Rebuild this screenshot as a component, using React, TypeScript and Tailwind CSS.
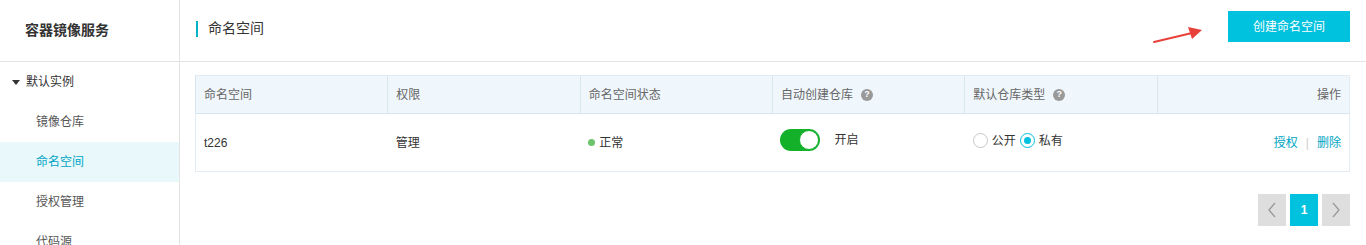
import React from 'react';

const font = { fontFamily: '"Liberation Sans", "Noto Sans CJK SC", sans-serif' };

const Help = () => (
  <span className="ml-2 inline-flex h-[12px] w-[12px] items-center justify-center rounded-full bg-[#999] text-[9px] font-bold leading-none text-white">
    ?
  </span>
);

const Sidebar = () => (
  <div className="w-[180px] shrink-0 border-r border-[#e3e3e3] bg-white">
    <div className="flex h-[62px] items-center border-b border-[#e3e3e3] pl-[25px] text-[14px] font-bold text-[#333]">
      容器镜像服务
    </div>
    <div className="flex h-[40px] items-center pl-[12px] text-[12px] text-[#333]">
      <span className="mr-[6px] inline-block h-0 w-0 border-x-[4px] border-t-[5px] border-x-transparent border-t-[#333]" />
      默认实例
    </div>
    {['镜像仓库', '命名空间', '授权管理', '代码源'].map((t) => (
      <div
        key={t}
        className={`flex h-[40px] items-center pl-[36px] text-[12px] ${
          t === '命名空间' ? 'bg-[#e8f8fb] text-[#00a5c5]' : 'text-[#555]'
        }`}
      >
        {t}
      </div>
    ))}
  </div>
);

const Toggle = () => (
  <span className="relative inline-flex h-[22px] w-[40px] items-center rounded-full bg-[#13b12a]">
    <span className="absolute right-[1px] h-[20px] w-[20px] rounded-full border border-[#13b12a] bg-white" />
  </span>
);

const Radio = ({ on }: { on?: boolean }) => (
  <span
    className={`inline-flex h-[15px] w-[15px] items-center justify-center rounded-full border bg-white ${
      on ? 'border-[#00c1de]' : 'border-[#c8c8c8]'
    }`}
  >
    {on && <span className="h-[7px] w-[7px] rounded-full bg-[#00c1de]" />}
  </span>
);

const Arrow = () => (
  <svg width="56" height="22" viewBox="0 0 56 22" className="absolute left-[1152px] top-[25px]">
    <path d="M2 17 L40 8" stroke="#e8413a" strokeWidth="2" strokeLinecap="round" />
    <path d="M36 2 L50 5 L40 14 Z" fill="#e8413a" />
  </svg>
);

export default function App() {
  const headers = ['命名空间', '权限', '命名空间状态', '自动创建仓库', '默认仓库类型', '操作'];
  return (
    <div className="relative flex h-[245px] w-[1366px] overflow-hidden bg-white" style={font}>
      <Sidebar />
      <div className="flex-1">
        <div className="flex h-[62px] items-start justify-between border-b border-[#e3e3e3] pl-[16px] pr-[16px]">
          <div className="mt-[18px] flex items-center">
            <span className="h-[16px] w-[2px] bg-[#00b3c6]" />
            <span className="ml-[10px] text-[14px] text-[#333]">命名空间</span>
          </div>
          <button className="mt-[11px] h-[31px] w-[122px] bg-[#00c1de] text-[12px] text-white">创建命名空间</button>
        </div>
        <div className="pl-[15px] pr-[16px] pt-[13px]">
          <table className="w-full table-fixed border-collapse border border-[#e2ecf2] text-[12px]">
            <thead>
              <tr className="h-[38px] bg-[#f0f7fc] text-[#666]">
                {headers.map((h, i) => (
                  <th
                    key={h}
                    className={`border-b border-l border-[#d8e6f0] px-[8px] font-normal ${
                      i === 5 ? 'text-right' : 'text-left'
                    }`}
                  >
                    <span className="inline-flex items-center">
                      {h}
                      {(i === 3 || i === 4) && <Help />}
                    </span>
                  </th>
                ))}
              </tr>
            </thead>
            <tbody>
              <tr className="h-[58px] text-[#333]">
                <td className="px-[8px]">t226</td>
                <td className="px-[8px]">管理</td>
                <td className="px-[8px]">
                  <span className="inline-flex items-center">
                    <span className="mr-[4px] h-[7px] w-[7px] rounded-full bg-[#6cc36c]" />
                    正常
                  </span>
                </td>
                <td className="px-[8px]">
                  <span className="inline-flex items-center">
                    <Toggle />
                    <span className="ml-[14px]">开启</span>
                  </span>
                </td>
                <td className="px-[8px]">
                  <span className="inline-flex items-center gap-[4px]">
                    <Radio />
                    <span>公开</span>
                    <Radio on />
                    <span>私有</span>
                  </span>
                </td>
                <td className="px-[8px] text-right">
                  <span className="text-[#00a5c5]">授权</span>
                  <span className="mx-[8px] text-[#ccc]">|</span>
                  <span className="text-[#00a5c5]">删除</span>
                </td>
              </tr>
            </tbody>
          </table>
          <div className="mt-[22px] flex justify-end gap-[4px]">
            <span className="flex h-[32px] w-[28px] items-center justify-center bg-[#dedede] text-[#999]">
              <svg width="10" height="16" viewBox="0 0 10 16"><path d="M8 1 L2 8 L8 15" stroke="#9a9a9a" strokeWidth="1.3" fill="none" /></svg>
            </span>
            <span className="flex h-[32px] w-[28px] items-center justify-center bg-[#00c1de] text-[12px] font-bold text-white">1</span>
            <span className="flex h-[32px] w-[28px] items-center justify-center bg-[#dedede]">
              <svg width="10" height="16" viewBox="0 0 10 16"><path d="M2 1 L8 8 L2 15" stroke="#9a9a9a" strokeWidth="1.3" fill="none" /></svg>
            </span>
          </div>
        </div>
      </div>
      <Arrow />
    </div>
  );
}
